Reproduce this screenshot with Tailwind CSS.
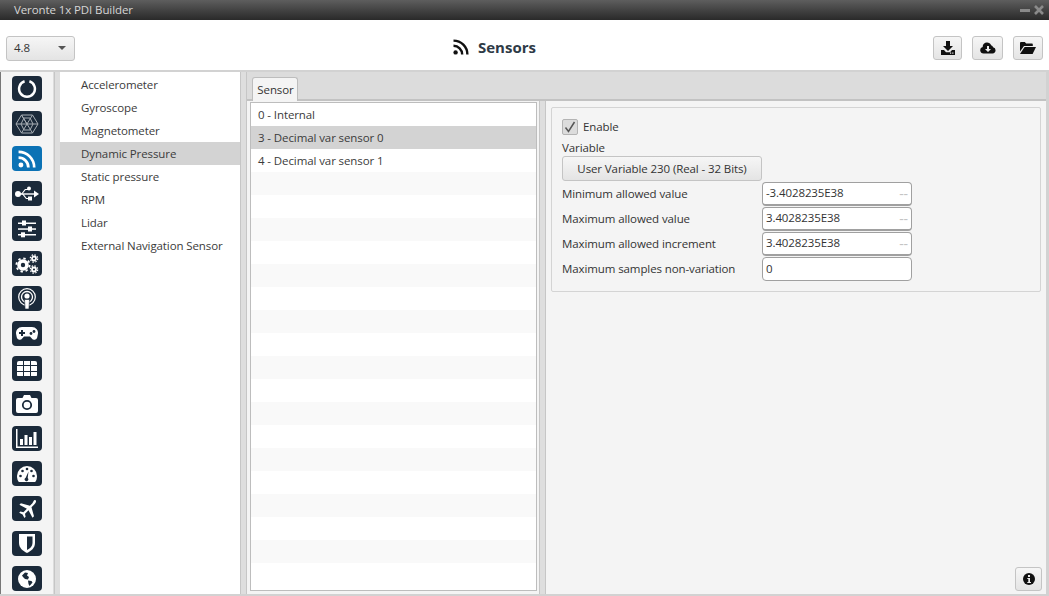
<!DOCTYPE html>
<html lang="en">
<head>
    <meta charset="UTF-8">
    <title>Veronte 1x PDI Builder</title>
    <script src="https://cdn.jsdelivr.net/npm/@tailwindcss/browser@4"></script>
</head>
<body class="w-[1049px] h-[596px] overflow-hidden bg-white font-['Open_Sans','Liberation_Sans',sans-serif] text-[11.5px] tracking-[-0.1px] text-[#333]">
    <!-- Title bar -->
    <div class="h-[20px] flex items-center justify-between pl-[14px] pr-[5px] bg-gradient-to-b from-[#5e5e5e] to-[#2a2a2a]">
        <span class="text-[#d6d6d6]">Veronte 1x PDI Builder</span>
        <div class="flex items-center gap-[4px]">
            <div class="w-[10px] h-[3px] bg-[#8a8a8a]"></div>
            <svg class="w-[10px] h-[10px]" viewBox="0 0 10 10"><path d="M1 1l8 8M9 1l-8 8" stroke="#8a8a8a" stroke-width="2.6"/></svg>
        </div>
    </div>

    <!-- Toolbar -->
    <div class="h-[50px] relative flex items-center justify-between pl-[6px] pr-[6px]">
        <div class="w-[69px] h-[25px] mt-[6px] flex items-center justify-between pl-[7px] pr-[8px] rounded-[3px] border border-[#c4c4c4] bg-gradient-to-b from-[#f6f6f6] to-[#e4e4e4]">
            <span class="text-[#333]">4.8</span>
            <div class="w-0 h-0 border-l-[4px] border-r-[4px] border-t-[4px] border-l-transparent border-r-transparent border-t-[#555]"></div>
        </div>
        <div class="absolute left-[453px] top-[16px] flex items-center gap-[9px]">
            <svg class="w-[16px] h-[16px]" viewBox="0 0 16 16" fill="none" stroke="#111"><circle cx="2.6" cy="13.4" r="2.2" fill="#111" stroke="none"/><path d="M0.5 6.8a8.7 8.7 0 0 1 8.700 8.700" stroke-width="2.4"/><path d="M0.5 1.6a13.9 13.9 0 0 1 13.900 13.900" stroke-width="2.4"/></svg>
            <span class="text-[15px] font-bold text-[#2e3a46] tracking-normal">Sensors</span>
        </div>
        <div class="flex items-center mt-[6px]">
            <div class="w-[29px] h-[24px] flex items-center justify-center rounded-[3px] border border-[#c4c4c4] bg-gradient-to-b from-[#f6f6f6] to-[#e4e4e4]">
                <svg class="w-[14px] h-[14px]" viewBox="0 0 14 14" fill="#111"><path d="M5 0h4v5h3L7 10 2 5h3z"/><path d="M0 9h3l2 2.200h4L11 9h3v5H0z"/><rect x="9" y="11.500" width="1.200" height="1.200" fill="#eee"/><rect x="11.200" y="11.500" width="1.200" height="1.200" fill="#eee"/></svg>
            </div>
            <div class="w-[31px] h-[24px] ml-[10px] flex items-center justify-center rounded-[3px] border border-[#c4c4c4] bg-gradient-to-b from-[#f6f6f6] to-[#e4e4e4]">
                <svg class="w-[16px] h-[12px]" viewBox="0 0 16 12"><path d="M3.500 11.500a3.300 3.300 0 0 1-.8-6.500A4.300 4.300 0 0 1 7 .5a4.400 4.400 0 0 1 4.100 2.800 2.600 2.600 0 0 1 2 1.900A3.200 3.200 0 0 1 12.600 11.500z" fill="#111"/><path d="M7 4h2v3h2L8 10 5 7h2z" fill="#eee"/></svg>
            </div>
            <div class="w-[30px] h-[24px] ml-[10px] flex items-center justify-center rounded-[3px] border border-[#c4c4c4] bg-gradient-to-b from-[#f6f6f6] to-[#e4e4e4]">
                <svg class="w-[16px] h-[12px]" viewBox="0 0 16 12" fill="#111"><path d="M0 1.200C0 .5.5 0 1.200 0h3.600l1.400 1.600h5.600c.6 0 1 .4 1 1V4H4L0 9.500z"/><path d="M4.600 5H16l-3.400 7H0z"/></svg>
            </div>
        </div>
    </div>

    <!-- Main area -->
    <div class="h-[526px] flex bg-[#d2d2d2] pt-[2px] pb-[2px] pr-[3px]">
        <!-- Icon rail -->
        <div class="w-[54px] shrink-0 bg-[#f4f4f4] border-l border-[#777] pl-[1px] pr-[2px] flex flex-col items-center pt-[4px] gap-[10px] border-r border-r-[#dcdcdc] overflow-hidden">
            <div class="w-[30px] h-[25px] shrink-0 rounded-[4px] bg-[#1b2a3a] flex items-center justify-center">
                <svg class="w-[20px] h-[20px]" viewBox="0 0 20 20" fill="none"><path d="M7.600 2.300a7.900 7.900 0 1 0 4.800 0" stroke="#fff" stroke-width="2.500"/></svg>
            </div>
            <div class="w-[30px] h-[25px] shrink-0 rounded-[4px] bg-[#1b2a3a] flex items-center justify-center">
                <svg class="w-[24px] h-[20px]" viewBox="0 0 24 20" fill="none" stroke="#a8aeb4" stroke-width="1"><path d="M6.500 1h11L23 10l-5.500 9h-11L1 10z"/><path d="M6.500 1L17.500 19M17.500 1L6.500 19M1 10h22M6.500 1L12 10M9 4h6l3 6-3 6H9l-3-6z"/></svg>
            </div>
            <div class="w-[30px] h-[25px] shrink-0 rounded-[4px] bg-[#0b72b5] flex items-center justify-center">
                <svg class="w-[18px] h-[18px]" viewBox="0 0 16 16" fill="none" stroke="#fff"><circle cx="2.6" cy="13.4" r="2.2" fill="#fff" stroke="none"/><path d="M0.500 6.800a8.700 8.700 0 0 1 8.700 8.700" stroke-width="2.400"/><path d="M0.500 1.600a13.900 13.900 0 0 1 13.900 13.900" stroke-width="2.400"/></svg>
            </div>
            <div class="w-[30px] h-[25px] shrink-0 rounded-[4px] bg-[#1b2a3a] flex items-center justify-center">
                <svg class="w-[26px] h-[18px]" viewBox="0 0 26 18" fill="#fff"><circle cx="4" cy="9" r="3"/><path d="M4 8.300h17v1.400H4z"/><path d="M20 5.500l5 3.500-5 3.500z"/><path d="M7 9l4-5h3V5h-2.500L8 9.500zM8 9l4 5h3v-1h-2.500L9.500 9z"/><circle cx="15" cy="3.500" r="2"/><rect x="14" y="11.500" width="4" height="4"/></svg>
            </div>
            <div class="w-[30px] h-[25px] shrink-0 rounded-[4px] bg-[#1b2a3a] flex items-center justify-center">
                <svg class="w-[20px] h-[18px]" viewBox="0 0 20 18" fill="#fff"><rect x="1" y="2.500" width="18" height="1.500"/><rect x="1" y="8.300" width="18" height="1.500"/><rect x="1" y="14" width="18" height="1.500"/><rect x="5" y="0.500" width="4" height="5"/><rect x="11" y="6.500" width="4" height="5"/><rect x="4" y="12.300" width="4" height="5"/></svg>
            </div>
            <div class="w-[30px] h-[25px] shrink-0 rounded-[4px] bg-[#1b2a3a] flex items-center justify-center">
                <svg class="w-[24px] h-[20px]" viewBox="0 0 24 20" fill="none" stroke="#fff"><circle cx="8" cy="11" r="4" stroke-width="3.600"/><circle cx="8" cy="11" r="6.600" stroke-width="1.800" stroke-dasharray="2.400 2.800"/><circle cx="19" cy="4.500" r="2" stroke-width="1.800"/><circle cx="19" cy="4.500" r="3.700" stroke-width="1.200" stroke-dasharray="1.500 1.400"/><circle cx="19" cy="15.500" r="2" stroke-width="1.800"/><circle cx="19" cy="15.500" r="3.700" stroke-width="1.200" stroke-dasharray="1.500 1.400"/></svg>
            </div>
            <div class="w-[30px] h-[25px] shrink-0 rounded-[4px] bg-[#1b2a3a] flex items-center justify-center">
                <svg class="w-[20px] h-[22px]" viewBox="0 0 20 22" fill="none" stroke="#fff"><circle cx="10" cy="9" r="8.300" stroke-width="1.200"/><circle cx="10" cy="9" r="5.500" stroke-width="1.300"/><circle cx="10" cy="8" r="2.600" fill="#fff" stroke="none"/><path d="M7.500 11.500h5l-.6 9.500H8.100z" fill="#fff" stroke="#1b2a3a" stroke-width=".6"/></svg>
            </div>
            <div class="w-[30px] h-[25px] shrink-0 rounded-[4px] bg-[#1b2a3a] flex items-center justify-center">
                <svg class="w-[22px] h-[14px]" viewBox="0 0 22 14"><path d="M6 0h10a6 6 0 0 1 5.800 7.500l-.6 3a3 3 0 0 1-5.400 1L14 9.500H8l-1.800 2a3 3 0 0 1-5.400-1l-.6-3A6 6 0 0 1 6 0z" fill="#fff"/><path d="M5 3h2v2h2v2H7v2H5V7H3V5h2z" fill="#1b2a3a"/><circle cx="15" cy="6.500" r="1.400" fill="#1b2a3a"/><circle cx="18" cy="4.500" r="1.400" fill="#1b2a3a"/></svg>
            </div>
            <div class="w-[30px] h-[25px] shrink-0 rounded-[4px] bg-[#1b2a3a] flex items-center justify-center">
                <div class="w-[20px] h-[16px] grid grid-cols-3 grid-rows-3 gap-[1px] rounded-[2px] overflow-hidden">
                    <div class="bg-white"></div><div class="bg-white"></div><div class="bg-white"></div>
                    <div class="bg-white"></div><div class="bg-white"></div><div class="bg-white"></div>
                    <div class="bg-white"></div><div class="bg-white"></div><div class="bg-white"></div>
                </div>
            </div>
            <div class="w-[30px] h-[25px] shrink-0 rounded-[4px] bg-[#1b2a3a] flex items-center justify-center">
                <svg class="w-[22px] h-[18px]" viewBox="0 0 22 18"><path d="M2 3h4.500L8 0h6l1.500 3H20a2 2 0 0 1 2 2v11a2 2 0 0 1-2 2H2a2 2 0 0 1-2-2V5a2 2 0 0 1 2-2z" fill="#fff"/><circle cx="11" cy="10" r="4.200" fill="none" stroke="#1b2a3a" stroke-width="1.800"/></svg>
            </div>
            <div class="w-[30px] h-[25px] shrink-0 rounded-[4px] bg-[#1b2a3a] flex items-center justify-center">
                <svg class="w-[22px] h-[19px]" viewBox="0 0 22 19" fill="#fff"><path d="M0 0h1.500v17.500H22V19H0z"/><rect x="4" y="10" width="3" height="6"/><rect x="8.500" y="6" width="3" height="10"/><rect x="13" y="8" width="3" height="8"/><rect x="17.500" y="3" width="3" height="13"/></svg>
            </div>
            <div class="w-[30px] h-[25px] shrink-0 rounded-[4px] bg-[#1b2a3a] flex items-center justify-center">
                <svg class="w-[20px] h-[16px]" viewBox="0 0 20 16"><path d="M10 0a10 10 0 0 1 10 10c0 2.500-.6 4.500-1.800 6H1.800C.6 14.500 0 12.500 0 10A10 10 0 0 1 10 0z" fill="#fff"/><g fill="#1b2a3a"><circle cx="3.500" cy="10" r="1.300"/><circle cx="5.500" cy="5" r="1.300"/><circle cx="10" cy="3" r="1.300"/><circle cx="16.500" cy="10" r="1.300"/><circle cx="14.500" cy="5" r="1.300"/><path d="M11.500 5.500l-.8 6.500a1.800 1.800 0 1 1-2-.3z"/></g></svg>
            </div>
            <div class="w-[30px] h-[25px] shrink-0 rounded-[4px] bg-[#1b2a3a] flex items-center justify-center">
                <svg class="w-[20px] h-[20px]" viewBox="0 0 20 20" fill="#fff"><path d="M17.500 1c1.200 0 1.700.6 1.500 1.800-.2 1-1 2-2 3l-2.500 2.500 2.500 9-1.500 1.500-4-7.500-3.500 3.500.6 3-1.200 1.200-1.800-3.400-3.400-1.800 1.200-1.200 3 .6 3.500-3.500L2.400 5.700 3.900 4.200l9 2.500 2.500-2.500c.8-.8 1.300-3.200 2.100-3.200z"/></svg>
            </div>
            <div class="w-[30px] h-[25px] shrink-0 rounded-[4px] bg-[#1b2a3a] flex items-center justify-center">
                <svg class="w-[16px] h-[19px]" viewBox="0 0 16 19"><path d="M0 0h16v9c0 5-4 8-8 10-4-2-8-5-8-10z" fill="#fff"/><path d="M8 2.500h5.500V9c0 3.200-2.500 5.500-5.500 7z" fill="#1b2a3a"/></svg>
            </div>
            <div class="w-[30px] h-[25px] shrink-0 rounded-[4px] bg-[#1b2a3a] flex items-center justify-center">
                <svg class="w-[18px] h-[18px]" viewBox="0 0 18 18"><circle cx="9" cy="9" r="9" fill="#fff"/><path d="M4 5.500l3-3 3 .5-1 2.500 2 1.500-1 2.500-3-.5-2-2zM10 10.500l3.500.5 1 1.500-3 3.500-1-2z" fill="#1b2a3a"/></svg>
            </div>
        </div>
        <div class="w-[6px] shrink-0 border-l border-[#c6c6c6] bg-[#dedede]"></div>

        <!-- Tree list -->
        <div class="w-[180px] shrink-0 bg-white pt-[1px] text-[#3b3b3b]">
            <div class="h-[23px] flex items-center pl-[21px]">Accelerometer</div>
            <div class="h-[23px] flex items-center pl-[21px]">Gyroscope</div>
            <div class="h-[23px] flex items-center pl-[21px]">Magnetometer</div>
            <div class="h-[23px] flex items-center pl-[21px] bg-[#d3d3d3]">Dynamic Pressure</div>
            <div class="h-[23px] flex items-center pl-[21px]">Static pressure</div>
            <div class="h-[23px] flex items-center pl-[21px]">RPM</div>
            <div class="h-[23px] flex items-center pl-[21px]">Lidar</div>
            <div class="h-[23px] flex items-center pl-[21px]">External Navigation Sensor</div>
        </div>
        <div class="w-[7px] shrink-0 border-x border-[#c6c6c6] bg-[#dedede]"></div>

        <!-- Right side -->
        <div class="flex-1 flex flex-col min-w-0">
            <!-- Tab strip -->
            <div class="h-[29px] shrink-0 bg-[#dcdcdc] border-b-[2px] border-[#c2c2c2] pl-[5px] pt-[5px] flex">
                <div class="w-[46px] h-[24px] pl-[1px] bg-[#f4f4f4] border border-b-0 border-[#bdbdbd] rounded-t-[3px] flex items-center justify-center">Sensor</div>
            </div>
            <div class="flex-1 flex min-h-0 bg-[#f4f4f4]">
                <!-- Sensor list -->
                <div class="w-[293px] shrink-0 pl-[3px] pr-[2px] pt-[1px] pb-[3px] border-r border-[#c6c6c6]">
                    <div class="h-full border border-[#bdbdbd] bg-white overflow-hidden text-[#3b3b3b]">
                        <div class="h-[23px] flex items-center pl-[7px] bg-white">0 - Internal</div>
                        <div class="h-[23px] flex items-center pl-[7px] bg-[#d3d3d3]">3 - Decimal var sensor 0</div>
                        <div class="h-[23px] flex items-center pl-[7px] bg-white">4 - Decimal var sensor 1</div>
                        <div class="h-[23px] bg-[#f9f9f9]"></div><div class="h-[23px]"></div>
                        <div class="h-[23px] bg-[#f9f9f9]"></div><div class="h-[23px]"></div>
                        <div class="h-[23px] bg-[#f9f9f9]"></div><div class="h-[23px]"></div>
                        <div class="h-[23px] bg-[#f9f9f9]"></div><div class="h-[23px]"></div>
                        <div class="h-[23px] bg-[#f9f9f9]"></div><div class="h-[23px]"></div>
                        <div class="h-[23px] bg-[#f9f9f9]"></div><div class="h-[23px]"></div>
                        <div class="h-[23px] bg-[#f9f9f9]"></div><div class="h-[23px]"></div>
                        <div class="h-[23px] bg-[#f9f9f9]"></div><div class="h-[23px]"></div>
                        <div class="h-[23px] bg-[#f9f9f9]"></div>
                    </div>
                </div>
                <div class="w-[6px] shrink-0 bg-[#dedede] border-r border-[#c6c6c6]"></div>

                <!-- Detail panel -->
                <div class="flex-1 relative pl-[5px] pr-[5px] pt-[6px] text-[#333]">
                    <div class="h-[185px] border border-[#d4d4d4] rounded-[2px] pl-[10px] pt-[11px]">
                        <div class="flex items-center gap-[5px] h-[16px]">
                            <div class="w-[16px] h-[16px] rounded-[2px] border border-[#b4b4b4] bg-[#dcdcdc] flex items-center justify-center">
                                <svg class="w-[12px] h-[12px]" viewBox="0 0 12 12" fill="none"><path d="M1.500 6.500L4.500 10.500L10.500 1" stroke="#555" stroke-width="1.500"/></svg>
                            </div>
                            <span>Enable</span>
                        </div>
                        <div class="h-[17px] mt-[4px] flex items-center">Variable</div>
                        <div class="w-[200px] h-[25px] rounded-[3px] border border-[#c4c4c4] bg-gradient-to-b from-[#f6f6f6] to-[#e4e4e4] flex items-center justify-center">User Variable 230 (Real - 32 Bits)</div>
                        <div class="flex items-center h-[25px]">
                            <span class="w-[200px]">Minimum allowed value</span>
                            <div class="w-[150px] h-[24px] rounded-[4px] border border-[#a0a0a0] border-b-[2px] bg-white flex items-center justify-between pl-[3px] pr-[3px]"><span>-3.4028235E38</span><span class="text-[#c4c4c4] text-[14px]">--</span></div>
                        </div>
                        <div class="flex items-center h-[25px]">
                            <span class="w-[200px]">Maximum allowed value</span>
                            <div class="w-[150px] h-[24px] rounded-[4px] border border-[#a0a0a0] border-b-[2px] bg-white flex items-center justify-between pl-[3px] pr-[3px]"><span>3.4028235E38</span><span class="text-[#c4c4c4] text-[14px]">--</span></div>
                        </div>
                        <div class="flex items-center h-[25px]">
                            <span class="w-[200px]">Maximum allowed increment</span>
                            <div class="w-[150px] h-[24px] rounded-[4px] border border-[#a0a0a0] border-b-[2px] bg-white flex items-center justify-between pl-[3px] pr-[3px]"><span>3.4028235E38</span><span class="text-[#c4c4c4] text-[14px]">--</span></div>
                        </div>
                        <div class="flex items-center h-[25px]">
                            <span class="w-[200px]">Maximum samples non-variation</span>
                            <div class="w-[150px] h-[24px] rounded-[4px] border border-[#a0a0a0] bg-white flex items-center pl-[3px] pr-[3px]"><span>0</span></div>
                        </div>
                    </div>
                    <div class="absolute right-[4px] bottom-[3px] w-[27px] h-[24px] rounded-[3px] border border-[#c4c4c4] bg-gradient-to-b from-[#f6f6f6] to-[#e4e4e4] flex items-center justify-center">
                        <svg class="w-[12px] h-[12px]" viewBox="0 0 12 12"><circle cx="6" cy="6" r="6" fill="#111"/><rect x="5" y="2" width="2" height="2" fill="#eee"/><path d="M4.300 5h2.700v4h1v1H4.300V9h1V6h-1z" fill="#eee"/></svg>
                    </div>
                </div>
            </div>
        </div>
    </div>
</body>
</html>
